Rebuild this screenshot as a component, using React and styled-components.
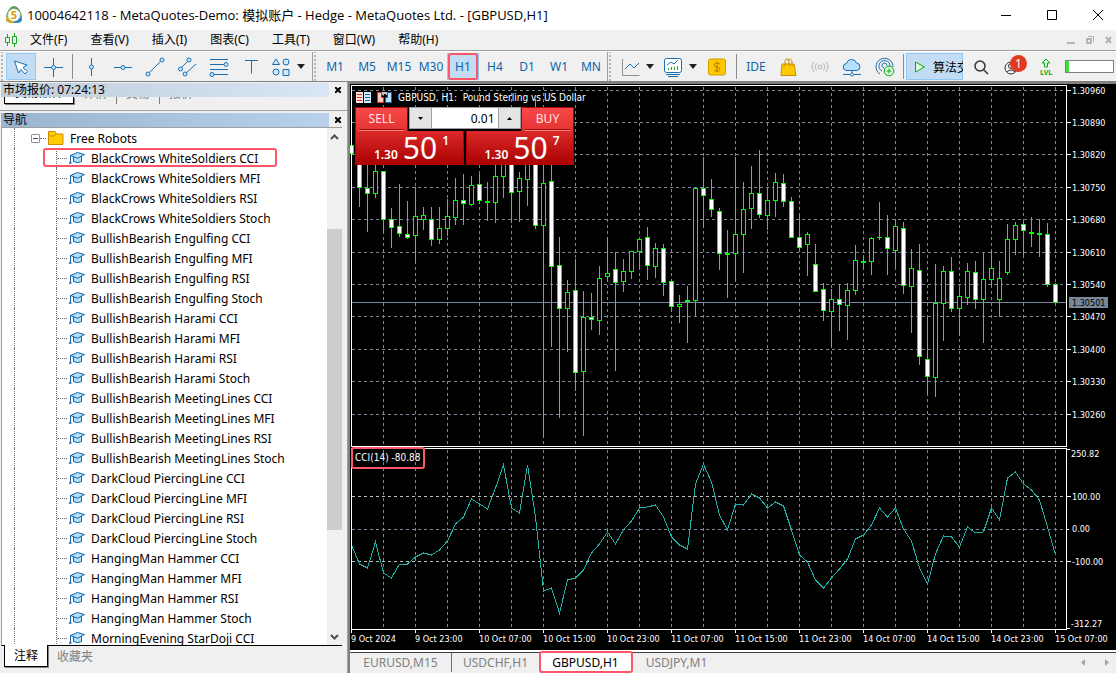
import React from 'react';
import styled, { createGlobalStyle, css } from 'styled-components';

const GlobalStyle = createGlobalStyle`
    * {
        box-sizing: border-box;
    }

    body {
        margin: 0;
        background: #f0f0f0;
        overflow: hidden;
        font-family: "Noto Sans", "Noto Sans CJK SC", sans-serif;
        font-size: 12px;
        color: #000;
    }

    button, input {
        font: inherit;
        color: inherit;
        padding: 0;
        margin: 0;
        border: 0;
        background: none;
        border-radius: 0;
    }
`

const Window = styled.div`
    display: flex;
    flex-direction: column;
    height: 100vh;
    background: #f0f0f0;
`

const TitleBar = styled.header`
    display: flex;
    align-items: center;
    height: 30px;
    flex: none;
    padding-left: 5px;
    background: #fff;
`

const Title = styled.h1`
    flex: 1;
    margin: 0 0 0 4px;
    font-family: "Open Sans", "Noto Sans CJK SC", sans-serif;
    font-size: 13px;
    font-weight: normal;
    line-height: 18px;
    white-space: nowrap;
`

const WindowButton = styled.button`
    display: flex;
    align-items: center;
    justify-content: flex-end;
    width: 46px;
    height: 30px;
    padding-right: 13px;
`

const MenuBar = styled.nav`
    display: flex;
    align-items: center;
    gap: 23px;
    height: 21px;
    flex: none;
    padding: 0 0 0 4px;
    border-bottom: 1px solid #a0a0a0;

    svg {
        flex: none;
    }
`

const MenuLogo = styled.span`
    display: flex;
    width: 14px;
    margin-right: -11px;
`

const MenuItem = styled.button`
    white-space: nowrap;
    line-height: 20px;
`

const MdiButtons = styled.div`
    display: flex;
    gap: 7px;
    margin-left: auto;
`

const MdiButton = styled.button`
    display: flex;
    width: 12px;
    height: 12px;
`

const Toolbar = styled.div`
    display: flex;
    height: 31px;
    flex: none;
    border-top: 1px solid #fff;
    border-bottom: 1px solid #808080;
`

const ToolGroup = styled.div`
    display: flex;
    align-items: center;
    flex: none;
    padding: 0 ${props => props.$end || 0}px 0 ${props => props.$start || 6}px;
    border-right: ${props => props.$last ? '0' : '1px solid #a0a0a0'};
    background: radial-gradient(circle, #b4b4b4 1px, transparent 1px) 0 2px / 4px 4px repeat-y;
`

const Tool = styled.button`
    position: relative;
    display: flex;
    align-items: center;
    justify-content: center;
    gap: 6px;
    flex: none;
    width: ${props => props.$width || 32}px;
    height: 27px;
    color: #0e65a8;
    white-space: nowrap;
    ${props => props.$active && css`
        background: #c2ddf3;
        box-shadow: inset 0 0 0 1px #90c8f6;
    `}

    svg {
        flex: none;
    }
`

const Divider = styled.span`
    width: 1px;
    height: 25px;
    margin: 0 ${props => props.$gap || 3}px;
    background: #8c8c8c;
`

const AlgoButton = styled(Tool)`
    justify-content: flex-start;
    padding-left: 8px;
    gap: 7px;
    color: #000;
    overflow: hidden;
`

const Badge = styled.span`
    position: absolute;
    top: 2px;
    right: 0;
    width: 17px;
    height: 17px;
    border-radius: 50%;
    background: #e23a20;
    color: #fff;
    line-height: 17px;
    text-align: center;
`

const Meter = styled.span`
    width: 49px;
    height: 13px;
    border: 1px solid #808080;
    background: linear-gradient(to right, #40dc40 3px, #fff 3px);
`

const Mark = styled.span`
    position: absolute;
    inset: ${props => props.$inset || '0'};
    border: 2px solid #ff5567;
    border-radius: 3px;
    pointer-events: none;
`

const Workspace = styled.main`
    display: flex;
    flex: 1;
    min-height: 0;
`

const Sidebar = styled.aside`
    display: flex;
    flex-direction: column;
    flex: none;
    width: 348px;
    padding-top: 1px;
    border-right: 1px solid #a0a0a0;
`

const Caption = styled.div`
    display: flex;
    height: 14px;
    flex: none;
    padding-left: 1px;
`

const CaptionText = styled.h2`
    flex: 1;
    margin: 0;
    padding-left: 2px;
    font-size: 12px;
    font-weight: normal;
    line-height: 14px;
    background: linear-gradient(to right, ${props => props.$from}, ${props => props.$to});
`

const CloseButton = styled.button`
    display: flex;
    align-items: center;
    justify-content: center;
    width: 18px;
`

const QuoteTabs = styled.div`
    display: flex;
    height: 14px;
    flex: none;
    padding-left: 4px;
    margin-bottom: 2px;
    border-bottom: 1px solid #a0a0a0;
`

const QuoteTab = styled.button`
    display: flex;
    align-items: flex-end;
    height: 7px;
    padding: 0 ${props => props.$active ? 10 : 9}px 3px;
    overflow: hidden;
    line-height: 14px;
    color: #808080;
    border-right: 1px solid #808080;

    &:last-child {
        border-right: 0;
    }

    ${props => props.$active && css`
        color: #000;
        background: #fff;
        border: solid #000;
        border-width: 0 1px 1px;
        box-shadow: 1px 1px 0 #808080;
    `}
`

const TreeBox = styled.div`
    display: flex;
    flex: 1;
    min-height: 0;
    margin: 0 5px 0 1px;
    border: 1px solid #a0a0a0;
    border-right: 0;
    border-bottom: 1px solid #000;
    background: #fff;
`

const Tree = styled.ul`
    flex: 1;
    margin: 0;
    padding: 0;
    overflow: hidden;
    list-style: none;
`

const TreeRow = styled.li`
    position: relative;
    display: flex;
    align-items: center;
    height: 20px;
    white-space: nowrap;

    svg {
        flex: none;
    }
`

const Rail = styled.span`
    flex: none;
    width: ${props => props.$width}px;
    height: 20px;
    border-right: 1px dotted #707070;
`

const Stub = styled.span`
    flex: none;
    width: ${props => props.$width}px;
    margin-right: 2px;
    border-top: 1px dotted #707070;
`

const Expander = styled.button`
    display: flex;
    align-items: center;
    justify-content: center;
    width: 9px;
    height: 9px;
    margin-left: 16px;
    border: 1px solid #919191;
    border-radius: 1px;
`

const Label = styled.span`
    margin-left: 6px;
`

const Scrollbar = styled.div`
    display: flex;
    flex-direction: column;
    align-items: center;
    flex: none;
    width: 15px;
    background: #f0f0f0;
`

const ScrollButton = styled.button`
    display: flex;
    align-items: center;
    justify-content: center;
    width: 15px;
    height: 17px;
`

const ScrollTrack = styled.div`
    display: flex;
    flex-direction: column;
    flex: 1;
    width: 100%;

    &::before {
        content: '';
        flex: 84;
    }

    &::after {
        content: '';
        flex: 98;
    }
`

const ScrollThumb = styled.div`
    flex: 301;
    background: #cdcdcd;
`

const SideTabs = styled.div`
    display: flex;
    height: 27px;
    flex: none;
    padding-left: 4px;
`

const SideTab = styled.button`
    height: 22px;
    padding: 0 9px;
    line-height: 20px;
    color: #808080;
    ${props => props.$active && css`
        margin-top: -1px;
        color: #000;
        background: #fff;
        border: solid #000;
        border-width: 0 1px 1px;
        box-shadow: 1px 1px 0 #808080;
    `}
`

const ChartArea = styled.section`
    display: flex;
    flex-direction: column;
    flex: 1;
    min-width: 0;
    border: solid #808080;
    border-width: 2px 0 0 2px;
`

const ChartWindow = styled.div`
    position: relative;
    flex: 1;
    min-height: 0;
    background: #000;

    > svg {
        display: block;
        width: 100%;
        height: 100%;
    }

    text {
        font-family: "DejaVu Sans Condensed", "DejaVu Sans", sans-serif;
        font-size: 9px;
        fill: #fff;
    }
`

const ChartTitle = styled.div`
    position: absolute;
    top: 6px;
    left: 6px;
    display: flex;
    align-items: center;
    gap: 6px;
    height: 14px;
    color: #fff;
    font-family: "DejaVu Sans Condensed", "DejaVu Sans", sans-serif;
    font-size: 10px;
    white-space: pre;
`

const IndicatorName = styled.div`
    position: absolute;
    top: 363px;
    left: 1px;
    width: 74px;
    height: 22px;
    border: 2px solid #ff5567;
    border-radius: 3px;
    padding-left: 2px;
    color: #fff;
    font-family: "DejaVu Sans Condensed", "DejaVu Sans", sans-serif;
    font-size: 10px;
    line-height: 18px;
    white-space: nowrap;
`

const TradePanel = styled.form`
    position: absolute;
    top: 23px;
    left: 5px;
    display: flex;
    flex-direction: column;
    width: 219px;
    background: #000;
`

const TradeRow = styled.div`
    display: flex;
    justify-content: space-between;
`

const SideButton = styled.button`
    width: 53px;
    height: 24px;
    padding: 0 4px;
    color: #ffe4e4;
    background: linear-gradient(#fb4a4a, #e23232);
    box-shadow: inset 0 1px 0 #b00000, inset 1px 0 0 #b00000, inset -1px 0 0 #b00000;

    span {
        display: block;
        height: 24px;
        line-height: 23px;
        border-bottom: 1px solid #ff8080;
        box-shadow: inset 0 -1px 0 #a01010;
    }
`

const PriceButton = styled.button`
    display: flex;
    align-items: flex-end;
    justify-content: center;
    gap: 5px;
    width: ${props => props.$width}px;
    height: 34px;
    padding-bottom: 3px;
    padding-left: 4px;
    color: #fff;
    font-weight: 600;
    line-height: 14px;
    background: linear-gradient(#dc2a2a, #a80000);
    box-shadow: inset 0 -1px 0 #b80000, inset 1px 0 0 #b80000, inset -1px 0 0 #b80000;
`

const BigDigits = styled.span`
    font-size: 30px;
    font-weight: normal;
    line-height: 28px;
`

const Pip = styled.span`
    align-self: flex-start;
    padding-top: 3px;
`

const Volume = styled.div`
    display: flex;
    width: 112px;
    height: 22px;
    border: 1px solid #a0a0a0;
    background: #fff;

    input {
        flex: 1;
        width: 20px;
        padding-right: 3px;
        text-align: right;
        border: solid #a0a0a0;
        border-width: 0 1px;
    }
`

const StepButton = styled.button`
    display: flex;
    align-items: center;
    justify-content: center;
    width: 21px;
    background: #e4e4e4;
`

const ChartTabs = styled.div`
    display: flex;
    align-items: center;
    height: 23px;
    flex: none;
    padding-right: 4px;
    border-top: 2px solid #fff;
    box-shadow: inset 0 1px 0 #404040;
`

const ChartTab = styled.button`
    position: relative;
    width: ${props => props.$width}px;
    height: 19px;
    color: #808080;
    line-height: 19px;
    border-right: 1px solid ${props => props.$line ? '#707070' : 'transparent'};
    ${props => props.$active && css`
        color: #000;
        background: #fff;
    `}
`

const TabArrows = styled.div`
    display: flex;
    gap: 17px;
    margin-left: auto;
`

const TabArrow = styled.button`
    display: flex;
    width: 7px;
`

const STROKE = '#1a6fb0';

const Glyph = ({ w = 20, h = 20, children, ...rest }) => (
    <svg width={w} height={h} viewBox={`0 0 ${w} ${h}`} fill="none" stroke={STROKE} aria-hidden="true" {...rest}>
        {children}
    </svg>
)

const Caret = () => (
    <Glyph w={8} h={5} stroke="none"><path d="M0 0h8l-4 5z" fill="#222" /></Glyph>
)

const AppLogo = () => (
    <svg width="18" height="18" viewBox="0 0 18 18" aria-hidden="true">
        <path d="M9 0C5 .5 2 5 1 11l3 2h10l3-2C16 5 13 .5 9 0z" fill="#5d9a55" />
        <path d="M5 8L1 12q-1 4 4 5h5z" fill="#d9a91c" />
        <path d="M13 9l4 3q1 4-4 5H8z" fill="#2f83c2" />
        <circle cx="9" cy="9" r="6" fill="#fff" stroke="#d8e8c8" />
        <text x="9" y="13" textAnchor="middle" fontSize="11" fontWeight="700" fill="#d79d00" stroke="none">5</text>
    </svg>
)

const CapIcon = () => (
    <Glyph w={16} h={14} fill="#b5e1ff" stroke="#1464a5">
        <path d="M4.500 5V10.500Q8.500 12.800 12.500 10.500V5z" />
        <path d="M1.500 4.500L8.500 1.500L15.500 3.500L8.500 7.300z" />
        <path d="M1.500 4.500V10" fill="none" />
        <path d="M1.500 9.500L.5 12.500H2z" />
    </Glyph>
)

const FolderIcon = () => (
    <Glyph w={16} h={14} stroke="#c98e06">
        <path d="M.5.500h6.500l1.500 2.500h6.500v10.500H.500z" fill="#ffcc00" />
        <path d="M.5 5h5.500l2-2" />
    </Glyph>
)

const drawTools = [
    { name: 'Vertical line', icon: <><path d="M10.500 1v18" /><circle cx="10.500" cy="10" r="2" fill="#cfeaff" /></> },
    { name: 'Horizontal line', icon: <><path d="M1 10.500h18" /><circle cx="10" cy="10.500" r="2" fill="#cfeaff" /></> },
    { name: 'Trend line', icon: <><path d="M3 17L17 3" /><circle cx="3" cy="17" r="2" fill="#cfeaff" /><circle cx="17" cy="3" r="2" fill="#cfeaff" /></> },
    { name: 'Channel', icon: <><path d="M3 12l9-9M8 17L19 7" /><circle cx="3.500" cy="12" r="2" fill="#cfeaff" /><circle cx="12" cy="3" r="2" fill="#cfeaff" /><circle cx="8" cy="17" r="2" fill="#cfeaff" /></> },
    { name: 'Fibonacci', icon: <><path d="M1 2.500h18M1 7.500h18M1 12.500h18M1 17.500h18" /><circle cx="17" cy="7.500" r="2" fill="#cfeaff" /><circle cx="3" cy="17.500" r="2" fill="#cfeaff" /></> },
    { name: 'Text', icon: <path d="M4 3.500h13M10.500 3.500v13" /> },
];

const frames = ['M1', 'M5', 'M15', 'M30', 'H1', 'H4', 'D1', 'W1', 'MN'];
const menus = ['文件(F)', '查看(V)', '插入(I)', '图表(C)', '工具(T)', '窗口(W)', '帮助(H)'];

const robots = [
    ...['CCI', 'MFI', 'RSI', 'Stoch'].map(s => `BlackCrows WhiteSoldiers ${s}`),
    ...['CCI', 'MFI', 'RSI', 'Stoch'].map(s => `BullishBearish Engulfing ${s}`),
    ...['CCI', 'MFI', 'RSI', 'Stoch'].map(s => `BullishBearish Harami ${s}`),
    ...['CCI', 'MFI', 'RSI', 'Stoch'].map(s => `BullishBearish MeetingLines ${s}`),
    ...['CCI', 'MFI', 'RSI', 'Stoch'].map(s => `DarkCloud PiercingLine ${s}`),
    ...['CCI', 'MFI', 'RSI', 'Stoch'].map(s => `HangingMan Hammer ${s}`),
    'MorningEvening StarDoji CCI',
];

// wick top, wick bottom, body top, body bottom, 1 = falling
const candles = [
    [145, 154, 145, 154, 1], [150, 207, 160, 188, 1], [150, 232, 188, 194, 1], [160, 198, 171, 194, 0],
    [171, 233, 171, 220, 1], [208, 248, 219, 228, 1], [184, 237, 226, 234, 1], [201, 239, 234, 238, 1],
    [187, 262, 216, 236, 0], [207, 230, 215, 220, 0], [207, 246, 219, 240, 1], [207, 244, 228, 240, 0],
    [199, 236, 216, 229, 0], [178, 225, 200, 218, 0], [174, 225, 200, 204, 1], [176, 206, 185, 205, 0],
    [174, 204, 184, 201, 1], [182, 221, 201, 203, 0], [160, 223, 176, 203, 0], [160, 198, 160, 177, 0],
    [160, 223, 160, 193, 1], [172, 222, 178, 192, 0], [160, 206, 160, 180, 0], [99, 229, 150, 226, 1],
    [160, 437, 183, 226, 0], [160, 347, 181, 267, 1], [237, 418, 265, 309, 1], [280, 352, 292, 309, 0],
    [259, 391, 290, 373, 1], [291, 436, 317, 372, 0], [293, 330, 317, 320, 1], [266, 335, 278, 321, 0],
    [237, 280, 273, 277, 0], [252, 371, 269, 283, 1], [259, 292, 271, 282, 0], [251, 279, 251, 272, 0],
    [239, 268, 239, 252, 0], [227, 280, 237, 266, 1], [243, 278, 248, 267, 0], [244, 296, 248, 283, 1],
    [279, 312, 281, 307, 1], [295, 323, 304, 307, 0], [286, 343, 300, 302, 0], [187, 317, 188, 301, 0],
    [157, 228, 188, 196, 1], [179, 217, 199, 210, 1], [208, 270, 211, 254, 1], [230, 298, 253, 255, 0],
    [157, 282, 234, 254, 0], [182, 273, 209, 235, 0], [166, 229, 193, 209, 0], [150, 218, 193, 215, 1],
    [188, 230, 200, 216, 0], [173, 217, 182, 201, 0], [174, 207, 183, 202, 1], [197, 238, 201, 238, 1],
    [215, 252, 237, 248, 1], [232, 276, 234, 245, 0], [244, 292, 264, 292, 1], [283, 321, 289, 311, 1],
    [289, 347, 299, 312, 0], [284, 331, 299, 305, 1], [283, 340, 290, 306, 0], [245, 295, 260, 291, 0],
    [256, 270, 261, 263, 0], [237, 275, 238, 262, 0], [202, 240, 237, 238, 0], [215, 275, 237, 249, 1],
    [219, 268, 226, 251, 0], [222, 294, 228, 286, 1], [249, 333, 268, 287, 0], [244, 365, 270, 357, 1],
    [317, 394, 359, 377, 1], [264, 397, 303, 378, 0], [266, 341, 271, 304, 0], [257, 312, 271, 309, 1],
    [288, 336, 296, 309, 0], [263, 305, 271, 298, 0], [261, 309, 272, 300, 1], [253, 343, 279, 300, 0],
    [250, 286, 268, 280, 0], [261, 317, 278, 300, 0], [224, 275, 239, 273, 0], [222, 255, 225, 240, 0],
    [222, 255, 224, 231, 1], [217, 247, 232, 234, 0], [219, 257, 233, 235, 0], [223, 287, 234, 285, 1],
    [283, 304, 284, 303, 1],
];

const cci = [
    545, 564, 568, 542, 573, 578, 564, 564, 557, 553, 555, 550, 541, 524, 517, 499, 504, 509, 488, 465,
    508, 513, 465, 517, 591, 588, 613, 580, 578, 570, 553, 544, 532, 544, 530, 521, 508, 507, 505, 517,
    537, 545, 549, 484, 464, 482, 515, 530, 504, 505, 494, 498, 508, 502, 506, 530, 555, 562, 580, 588,
    578, 569, 559, 539, 535, 525, 508, 517, 508, 529, 541, 568, 584, 554, 536, 537, 547, 527, 533, 532,
    508, 520, 478, 472, 484, 490, 500, 527, 555,
];

const prices = [
    [90, '1.30960'], [122, '1.30890'], [154, '1.30820'], [187, '1.30750'], [219, '1.30680'], [252, '1.30610'],
    [284, '1.30540'], [316, '1.30470'], [349, '1.30400'], [381, '1.30330'], [414, '1.30260'],
];

const times = [
    '9 Oct 2024', '9 Oct 23:00', '10 Oct 07:00', '10 Oct 15:00', '10 Oct 23:00', '11 Oct 07:00',
    '11 Oct 15:00', '11 Oct 23:00', '14 Oct 07:00', '14 Oct 15:00', '14 Oct 23:00', '15 Oct 07:00',
];

const columnX = i => 351 + i * 8;

const PriceChart = () => (
    <svg viewBox="350 84 766 566" preserveAspectRatio="xMinYMin meet" shapeRendering="crispEdges" role="img" aria-label="GBPUSD H1">
        <g stroke="#778899" strokeDasharray="3 3">
            {Array.from({ length: 22 }, (_, i) => 383.5 + i * 32).map(x => (
                <g key={x}>
                    <path d={`M${x} 87V446`} />
                    <path d={`M${x} 450V629`} />
                </g>
            ))}
            {prices.map(([y]) => <path key={y} d={`M352 ${y + 0.5}H1066`} />)}
            <path d="M352 529.500H1066" />
            <path d="M352 496.500H1066M352 561.500H1066" stroke="#c0c0c0" />
        </g>
        <path d="M352 302.500H1066" stroke="#778899" />
        {candles.map(([high, low, top, bottom, falling], i) => (
            <g key={i} fill="#0f0">
                <rect x={columnX(i)} y={high} width="1" height={low - high} />
                <rect x={columnX(i) - 2} y={top} width="5" height={bottom - top} />
                {bottom - top > 2 && (
                    <rect x={columnX(i) - 1} y={top + 1} width="3" height={bottom - top - 2} fill={falling ? '#fff' : '#000'} />
                )}
            </g>
        ))}
        <polyline points={cci.map((y, i) => `${columnX(i) + 0.5},${y}`).join(' ')} fill="none" stroke="#20b2aa" />
        <g fill="none" stroke="#fff">
            <path d="M351.500 446V85.500H1066.500V446.500H351" />
            <path d="M351.500 633V448.500H1066.500V629.500H351" />
            {prices.map(([y]) => <path key={y} d={`M1066 ${y + 0.5}h5`} />)}
            <path d="M1066 449.500h4M1066 496.500h5M1066 529.500h3M1066 561.500h5M1066 628.500h4" />
            {times.map((t, i) => <path key={t} d={`M${351.5 + i * 64} 629v4`} />)}
        </g>
        {prices.map(([y, label]) => <text key={y} x="1072" y={y + 4}>{label}</text>)}
        <rect x="1069" y="297" width="39" height="11" fill="#778899" />
        <text x="1072" y="306" style={{ fill: '#000' }}>1.30501</text>
        <text x="1071" y="457">250.82</text>
        <text x="1072" y="500">100.00</text>
        <text x="1072" y="532">0.00</text>
        <text x="1072" y="565">-100.00</text>
        <text x="1071" y="627">-312.27</text>
        {times.map((t, i) => <text key={t} x={351 + i * 64} y="642">{t}</text>)}
    </svg>
)

const App = () => (
    <>
        <GlobalStyle />
        <Window>
            <TitleBar>
                <AppLogo />
                <Title>10004642118 - MetaQuotes-Demo: 模拟账户 - Hedge - MetaQuotes Ltd. - [GBPUSD,H1]</Title>
                <WindowButton aria-label="Minimize"><Glyph w={10} h={10} stroke="#000"><path d="M0 5.500h10" /></Glyph></WindowButton>
                <WindowButton aria-label="Maximize"><Glyph w={10} h={10} stroke="#000"><path d="M.5.500h9v9h-9z" /></Glyph></WindowButton>
                <WindowButton aria-label="Close"><Glyph w={10} h={10} stroke="#000"><path d="M0 0l10 10M10 0L0 10" /></Glyph></WindowButton>
            </TitleBar>

            <MenuBar>
                <MenuLogo>
                    <Glyph w={14} h={16} stroke="#12a81e"><path d="M3.500 2v3M3.500 11v3M1.500 5.500h4v5h-4zM10.500 1v3M10.500 12v3M8.500 4.500h4v7h-4z" /></Glyph>
                </MenuLogo>
                {menus.map(m => <MenuItem key={m}>{m}</MenuItem>)}
                <MdiButtons>
                    <MdiButton aria-label="Minimize chart"><Glyph w={10} h={12} stroke="#b4b4b4" strokeWidth="2"><path d="M1 9h8" /></Glyph></MdiButton>
                    <MdiButton aria-label="Restore chart"><Glyph w={10} h={12} stroke="#b4b4b4"><path d="M3 2.500h5.500V8" /><path d="M2 5h4v4H2z" strokeWidth="2" /></Glyph></MdiButton>
                    <MdiButton aria-label="Close chart"><Glyph w={10} h={12} stroke="#b4b4b4" strokeWidth="2"><path d="M2 3l5 6M7 3L2 9" /></Glyph></MdiButton>
                </MdiButtons>
            </MenuBar>

            <Toolbar>
                <ToolGroup $end={3}>
                    <Tool $active $width={30} aria-label="Cursor">
                        <Glyph><path d="M3.500 4l4 12 2.500-3.500 4 4.500 2.500-2.500-4.500-4 4-2.500z" fill="#fff" /></Glyph>
                    </Tool>
                    <Tool $width={34} aria-label="Crosshair">
                        <Glyph><path d="M10.500 1v7M10.500 13v7M1 10.500h7M13 10.500h7" /><circle cx="10.500" cy="10.500" r="2" fill="#cfeaff" /></Glyph>
                    </Tool>
                    <Divider $gap={2} />
                    {drawTools.map(t => <Tool key={t.name} aria-label={t.name}><Glyph>{t.icon}</Glyph></Tool>)}
                    <Tool $width={42} aria-label="Shapes">
                        <Glyph fill="#cfeaff"><path d="M5 2l3.500 5.500h-7z" /><circle cx="15" cy="5" r="3" /><circle cx="5" cy="15" r="3" /><path d="M12 12.500h6v6h-6z" /></Glyph>
                        <Caret />
                    </Tool>
                </ToolGroup>
                <ToolGroup>
                    {frames.map(f => (
                        <Tool key={f} $active={f === 'H1'}>
                            {f}
                            {f === 'H1' && <Mark $inset="0 1px" />}
                        </Tool>
                    ))}
                </ToolGroup>
                <ToolGroup $last $start={7}>
                    <Tool $width={43} aria-label="Line chart">
                        <Glyph><path d="M2.500 2v16.500h17" stroke="#909090" /><path d="M5 12l5-5 4 4 5-5" /></Glyph>
                        <Caret />
                    </Tool>
                    <Tool $width={43} aria-label="Indicators">
                        <Glyph><rect x="1.500" y="1.500" width="17" height="14" rx="2" fill="#fff" /><path d="M3 17.500h14M5 19.500h10M4 8l4-3 3 2 4-4" /><path d="M5.500 13v-2M8.500 13v-3M11.500 13v-3M14.500 13V9" stroke="#12a81e" /></Glyph>
                        <Caret />
                    </Tool>
                    <Tool aria-label="Symbols">
                        <Glyph stroke="#d49a00"><rect x="1.500" y="2" width="17" height="16" rx="2" fill="#ffc800" /><path d="M13 7q-3-2-5-.5t0 3l4 1.200q2 1.500 0 3t-5-.5M10 4.500v11" stroke="#b37c00" /></Glyph>
                    </Tool>
                    <Divider />
                    <Tool>IDE</Tool>
                    <Tool aria-label="Market">
                        <Glyph stroke="#c98e06"><path d="M4 7h12l2 11.500H3z" fill="#ffc800" /><path d="M7 9V4q0-2 2-2t2 2v5M10 4q0-2 1.500-2T14 4v5" /></Glyph>
                    </Tool>
                    <Tool aria-label="Signals">
                        <Glyph stroke="#b4b4b4"><circle cx="10" cy="10" r="2" /><path d="M6.500 6.500q-3 3.500 0 7M13.500 6.500q3 3.500 0 7M4 5q-4 5 0 10M16 5q4 5 0 10" /></Glyph>
                    </Tool>
                    <Tool aria-label="Hosting">
                        <Glyph><path d="M5 13.500a3.500 3.500 0 0 1-.5-7q1-4 5-4t5 3.500a3.800 3.800 0 0 1 .5 7.500z" fill="#b5e1ff" /><path d="M10 13.500v3M1 17.500h7M12 17.500h7" /><circle cx="10" cy="17.500" r="1.500" fill="#fff" /></Glyph>
                    </Tool>
                    <Tool $width={33} aria-label="Community">
                        <Glyph><path d="M5 17a8.500 8.500 0 1 1 13-7M7 14a5.500 5.500 0 1 1 8-5M9 11a2.500 2.500 0 1 1 3-2.500M10 11v5" /><circle cx="14" cy="14" r="4.800" fill="#d9ffdc" stroke="#12a81e" /><path d="M14 11.500v5M11.500 14h5" stroke="#12a81e" /></Glyph>
                    </Tool>
                    <Divider $gap={2} />
                    <AlgoButton $active $width={57}>
                        <Glyph w={12} h={14} stroke="#12a81e"><path d="M1.500 2v10l9-5z" fill="#d9ffdc" /></Glyph>
                        算法交易
                    </AlgoButton>
                    <Tool $width={36} aria-label="Search">
                        <Glyph w={16} h={16} stroke="#333" strokeWidth="1.500"><circle cx="7" cy="7" r="5" /><path d="M10.500 10.500L15 15" /></Glyph>
                    </Tool>
                    <Tool $width={28} aria-label="Account">
                        <Glyph stroke="#333"><circle cx="8" cy="11" r="6" /><circle cx="8" cy="9" r="2.500" /><path d="M4 15q4-4 8 0" /></Glyph>
                        <Badge>1</Badge>
                    </Tool>
                    <Tool $width={38} aria-label="Level">
                        <Glyph w={16} h={18} stroke="#12a81e">
                            <path d="M8 1l4 4H9.500v4h-3V5H4z" fill="#d9ffdc" />
                            <text x="8" y="17" textAnchor="middle" fontSize="7" fontWeight="700" fill="#12a81e" stroke="none">LVL</text>
                        </Glyph>
                    </Tool>
                    <Meter />
                </ToolGroup>
            </Toolbar>

            <Workspace>
                <Sidebar>
                    <Caption>
                        <CaptionText $from="#bfcddb" $to="#d9e6f4">市场报价: 07:24:13</CaptionText>
                        <CloseButton aria-label="Close quotes"><Glyph w={6} h={6} stroke="#000" strokeWidth="2"><path d="M0 0l6 6M6 0L0 6" /></Glyph></CloseButton>
                    </Caption>
                    <QuoteTabs>
                        <QuoteTab $active>交易品种</QuoteTab>
                        <QuoteTab>详情</QuoteTab>
                        <QuoteTab>交易</QuoteTab>
                        <QuoteTab>报价</QuoteTab>
                    </QuoteTabs>
                    <Caption>
                        <CaptionText $from="#99b4d1" $to="#b9d1ea">导航</CaptionText>
                        <CloseButton aria-label="Close navigator"><Glyph w={6} h={6} stroke="#000" strokeWidth="2"><path d="M0 0l6 6M6 0L0 6" /></Glyph></CloseButton>
                    </Caption>
                    <TreeBox>
                        <Tree>
                            <TreeRow>
                                <Rail $width={13} />
                                <Expander aria-label="Collapse"><Glyph w={5} h={1} stroke="#2b4a8b"><path d="M0 .5h5" /></Glyph></Expander>
                                <Stub $width={6} />
                                <FolderIcon />
                                <Label>Free Robots</Label>
                            </TreeRow>
                            {robots.map((name, i) => (
                                <TreeRow key={name}>
                                    <Rail $width={13} />
                                    <Rail $width={42} />
                                    <Stub $width={10} />
                                    <CapIcon />
                                    <Label>{name}</Label>
                                    {i === 0 && <Mark $inset="0 50px 1px 41px" />}
                                </TreeRow>
                            ))}
                        </Tree>
                        <Scrollbar>
                            <ScrollButton aria-label="Scroll up"><Glyph w={9} h={6} stroke="#505050" strokeWidth="2"><path d="M1 5l3.500-3.500L8 5" /></Glyph></ScrollButton>
                            <ScrollTrack><ScrollThumb /></ScrollTrack>
                            <ScrollButton aria-label="Scroll down"><Glyph w={9} h={6} stroke="#505050" strokeWidth="2"><path d="M1 1l3.500 3.500L8 1" /></Glyph></ScrollButton>
                        </Scrollbar>
                    </TreeBox>
                    <SideTabs>
                        <SideTab $active>注释</SideTab>
                        <SideTab>收藏夹</SideTab>
                    </SideTabs>
                </Sidebar>

                <ChartArea>
                    <ChartWindow>
                        <PriceChart />
                        <ChartTitle>
                            <Glyph w={15} h={11} stroke="none"><path d="M0 0h7v11H0z" fill="#ffe0dc" /><path d="M8 0h7v11H8z" fill="#d4ecff" /><path d="M1 2h5v1H1zM1 5h5v1H1zM1 8h5v1H1z" fill="#e03020" /><path d="M9 2h5v1H9zM9 5h5v1H9zM9 8h5v1H9z" fill="#1464a5" /></Glyph>
                            <Glyph w={15} h={11} stroke="none"><path d="M.5.500h4v5h2v5h-6z" fill="#ffc9c2" stroke="#e03020" /><path d="M14.500.500h-4v5h-2v5h6z" fill="#b5e1ff" stroke="#1464a5" /><path d="M5 0h5v3H9V2H6v1H5z" fill="#ccc" /></Glyph>
                            <span>GBPUSD, H1:  Pound Sterling vs US Dollar</span>
                        </ChartTitle>
                        <TradePanel onSubmit={e => e.preventDefault()}>
                            <TradeRow>
                                <SideButton type="button"><span>SELL</span></SideButton>
                                <Volume>
                                    <StepButton type="button" aria-label="Decrease volume"><Glyph w={5} h={3} stroke="none"><path d="M0 0h5L2.500 3z" fill="#000" /></Glyph></StepButton>
                                    <input aria-label="Volume" defaultValue="0.01" />
                                    <StepButton type="button" aria-label="Increase volume"><Glyph w={5} h={3} stroke="none"><path d="M0 3h5L2.500 0z" fill="#000" /></Glyph></StepButton>
                                </Volume>
                                <SideButton type="button"><span>BUY</span></SideButton>
                            </TradeRow>
                            <TradeRow>
                                <PriceButton type="button" $width={109}>1.30<BigDigits>50</BigDigits><Pip>1</Pip></PriceButton>
                                <PriceButton type="button" $width={108}>1.30<BigDigits>50</BigDigits><Pip>7</Pip></PriceButton>
                            </TradeRow>
                        </TradePanel>
                        <IndicatorName>CCI(14) -80.88</IndicatorName>
                    </ChartWindow>
                    <ChartTabs>
                        <ChartTab $width={102} $line>EURUSD,M15</ChartTab>
                        <ChartTab $width={88}>USDCHF,H1</ChartTab>
                        <ChartTab $width={92} $active>GBPUSD,H1<Mark $inset="-2px -2px -1px -1px" /></ChartTab>
                        <ChartTab $width={90}>USDJPY,M1</ChartTab>
                        <TabArrows>
                            <TabArrow aria-label="Previous tabs"><Glyph w={4} h={7} stroke="none"><path d="M4 0v7L0 3.500z" fill="#a8a8a8" /></Glyph></TabArrow>
                            <TabArrow aria-label="Next tabs"><Glyph w={4} h={7} stroke="none"><path d="M0 0v7l4-3.500z" fill="#a8a8a8" /></Glyph></TabArrow>
                        </TabArrows>
                    </ChartTabs>
                </ChartArea>
            </Workspace>
        </Window>
    </>
)

export default App
